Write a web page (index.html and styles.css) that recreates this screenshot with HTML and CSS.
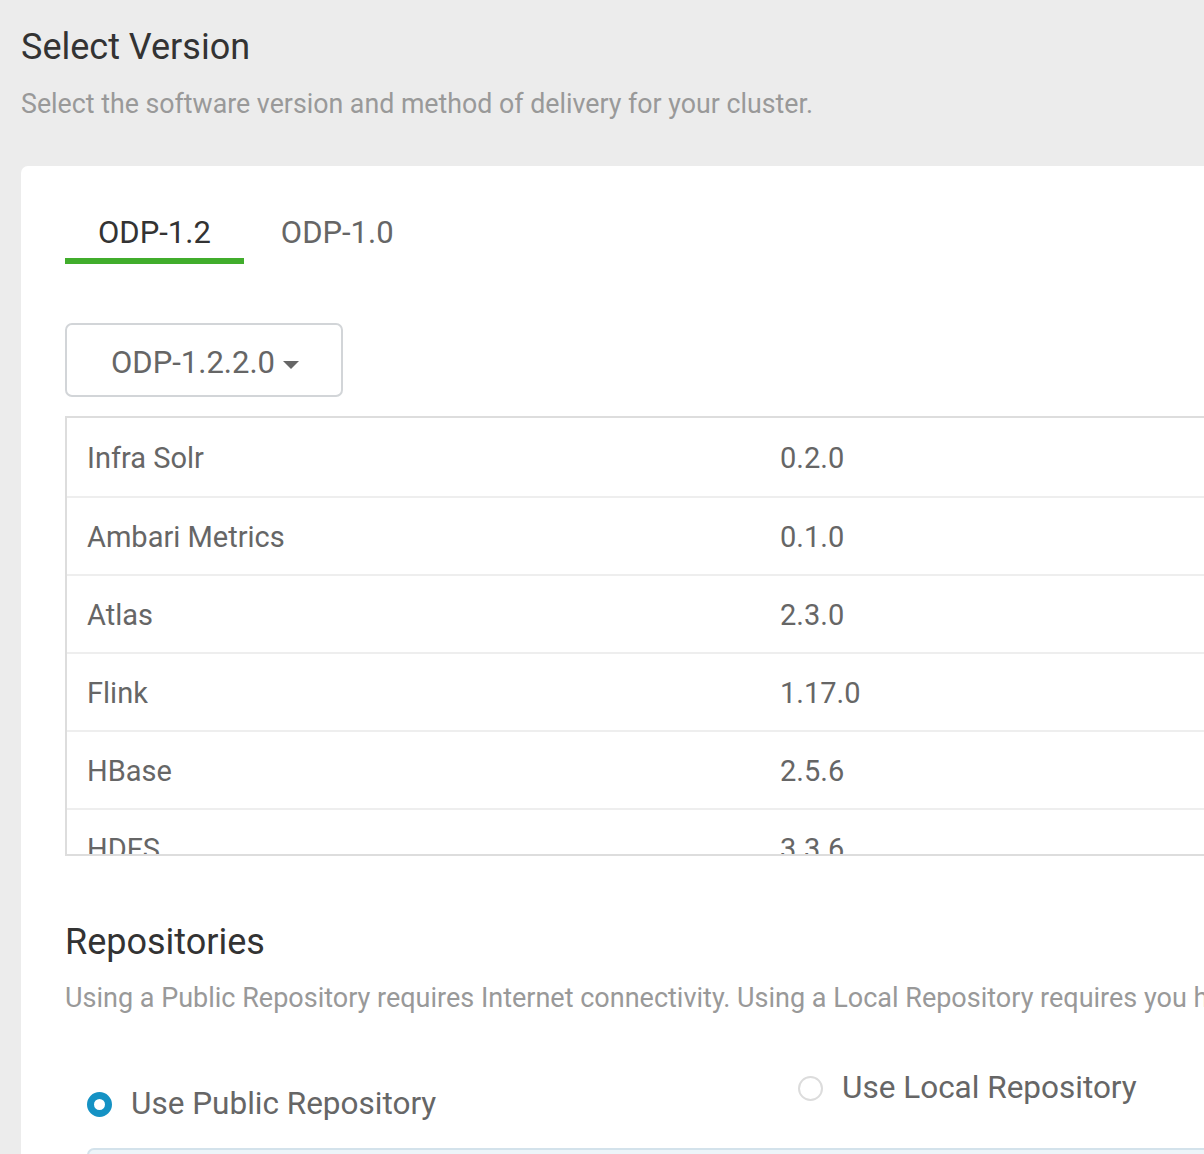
FILE: index.html
```html
<!DOCTYPE html>
<html lang="en">
<head>
<meta charset="utf-8">
<title>Select Version</title>
<link rel="stylesheet" href="styles.css">
</head>
<body>
<div class="page">
  <h1 class="title">Select Version</h1>
  <p class="subtitle">Select the software version and method of delivery for your cluster.</p>

  <div class="card">
    <ul class="tabs">
      <li class="tab active">ODP-1.2</li>
      <li class="tab">ODP-1.0</li>
    </ul>

    <button class="dropdown" type="button">ODP-1.2.2.0<span class="caret"></span></button>

    <div class="stack">
      <div class="stack-row"><span class="name">Infra Solr</span><span class="ver">0.2.0</span></div>
      <div class="stack-row"><span class="name">Ambari Metrics</span><span class="ver">0.1.0</span></div>
      <div class="stack-row"><span class="name">Atlas</span><span class="ver">2.3.0</span></div>
      <div class="stack-row"><span class="name">Flink</span><span class="ver">1.17.0</span></div>
      <div class="stack-row"><span class="name">HBase</span><span class="ver">2.5.6</span></div>
      <div class="stack-row"><span class="name">HDFS</span><span class="ver">3.3.6</span></div>
    </div>

    <h2 class="section-title">Repositories</h2>
    <p class="section-desc">Using a Public Repository requires Internet connectivity. Using a Local Repository requires you have configured the software in a repository available in your network.</p>

    <div class="repo-options">
      <label class="radio radio-public"><span class="radio-dot checked"></span>Use Public Repository</label>
      <label class="radio radio-local"><span class="radio-dot"></span>Use Local Repository</label>
    </div>

    <div class="info-box"></div>
  </div>
</div>
</body>
</html>
```

FILE: styles.css
```css
html, body {
  margin: 0;
  padding: 0;
  overflow: hidden;
  background: #ececec;
}

body {
  font-family: Roboto, "Liberation Sans", Arial, sans-serif;
  color: #333;
  height: 1154px;
}

.page {
  width: 1700px;
  padding: 25px 0 0 21px;
}

.title {
  margin: 0;
  font-size: 36px;
  line-height: 44px;
  font-weight: 400;
  color: #333;
}

.subtitle {
  margin: 15px 0 0 0;
  font-size: 26.75px;
  line-height: 40px;
  color: #999;
  white-space: nowrap;
}

.card {
  margin-top: 42px;
  background: #fff;
  border-radius: 7px 0 0 0;
  padding: 47px 0 0 44px;
  height: 1200px;
}

.tabs {
  list-style: none;
  margin: 0;
  padding: 0;
  display: flex;
  gap: 4px;
}

.tab {
  padding: 0 33px 5px;
  font-size: 31px;
  line-height: 40px;
  color: #666;
  border-bottom: 6px solid transparent;
}

.tab.active {
  color: #333;
  border-bottom-color: #41ad2c;
}

.dropdown {
  display: flex;
  align-items: center;
  margin-top: 59px;
  height: 74px;
  box-sizing: border-box;
  padding: 6px 42px 0 44px;
  border: 2px solid #d2d5d8;
  border-radius: 7px;
  background: #fff;
  font-family: inherit;
  font-size: 31px;
  line-height: 64px;
  color: #666;
}

.caret {
  display: inline-block;
  margin-left: 8px;
  margin-top: 4px;
  width: 0;
  height: 0;
  border-left: 8px solid transparent;
  border-right: 8px solid transparent;
  border-top: 8px solid #666;
}

.stack {
  margin-top: 19px;
  width: 1400px;
  height: 440px;
  box-sizing: border-box;
  border: 2px solid #ddd;
  overflow: hidden;
}

.stack-row {
  display: flex;
  align-items: center;
  height: 78px;
  box-sizing: border-box;
  padding-top: 1px;
  font-size: 29px;
  color: #666;
}

.stack-row + .stack-row {
  border-top: 2px solid #eee;
}

.name {
  width: 693px;
  padding-left: 20px;
  box-sizing: border-box;
}

.ver {
  padding-left: 20px;
}

.section-title {
  margin: 64px 0 0 0;
  font-size: 36px;
  line-height: 44px;
  font-weight: 400;
  color: #333;
}

.section-desc {
  margin: 14px 0 0 0;
  font-size: 27px;
  line-height: 40px;
  color: #999;
  white-space: nowrap;
}

.repo-options {
  display: grid;
  grid-template-columns: 711px 711px;
  align-items: start;
  margin-top: 50px;
}

.radio {
  display: flex;
  align-items: center;
  padding-left: 22px;
  font-size: 31.5px;
  line-height: 40px;
  color: #666;
}

.radio-public {
  margin-top: 16px;
}

.radio-dot {
  width: 25px;
  height: 25px;
  box-sizing: border-box;
  border-radius: 50%;
  border: 2px solid #dcdcdc;
  background: #fff;
  margin-right: 19px;
  flex: none;
}

.radio-dot.checked {
  border: 7px solid #1592c4;
}

.info-box {
  margin: 24px 0 0 22px;
  height: 200px;
  border: 2px solid #d3e2eb;
  border-radius: 7px;
  background: #edf5f9;
}
```
